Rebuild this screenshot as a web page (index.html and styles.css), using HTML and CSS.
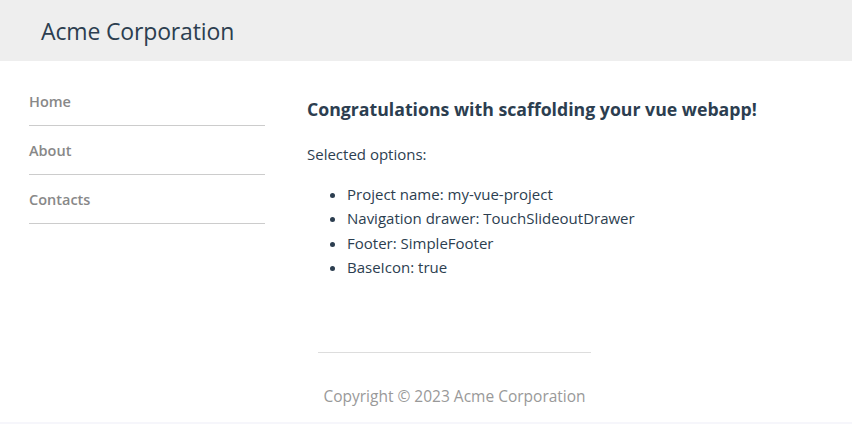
FILE: index.html
```html
<!DOCTYPE html>
<html lang="en">
<head>
<meta charset="utf-8">
<title>Acme Corporation</title>
<link rel="stylesheet" href="styles.css">
</head>
<body>
<div class="app">
  <header class="header">
    <span class="brand">Acme Corporation</span>
  </header>
  <div class="layout">
    <nav class="drawer">
      <a class="nav-item" href="#">Home</a>
      <a class="nav-item" href="#">About</a>
      <a class="nav-item" href="#">Contacts</a>
    </nav>
    <main class="content">
      <h2 class="title">Congratulations with scaffolding your vue webapp!</h2>
      <p class="lead">Selected options:</p>
      <ul class="options">
        <li>Project name: my-vue-project</li>
        <li>Navigation drawer: TouchSlideoutDrawer</li>
        <li>Footer: SimpleFooter</li>
        <li>BaseIcon: true</li>
      </ul>
    </main>
  </div>
  <footer class="footer">
    <div class="footer-rule"></div>
    <p class="copyright">Copyright © 2023 Acme Corporation</p>
  </footer>
  <div class="bottom-strip"></div>
</div>
</body>
</html>
```

FILE: styles.css
```css
html, body {
  margin: 0;
  padding: 0;
  background: #ffffff;
}
body {
  font-family: "Open Sans", "Noto Sans", "Liberation Sans", sans-serif;
  color: #2c3e50;
  font-size: 15px;
}
.app {
  display: flex;
  flex-direction: column;
  height: 424px;
}
.header {
  height: 61px;
  background: #eeeeee;
  display: flex;
  align-items: center;
  padding-left: 41px;
}
.brand {
  font-size: 23px;
  color: #2c3e50;
  letter-spacing: -0.15px;
}
.layout {
  display: flex;
  padding-top: 16px;
}
.drawer {
  margin-left: 29px;
  width: 236px;
  display: flex;
  flex-direction: column;
}
.nav-item {
  display: block;
  height: 48px;
  line-height: 50px;
  border-bottom: 1px solid #cccccc;
  color: #888888;
  font-weight: 600;
  font-size: 14.5px;
  text-decoration: none;
}
.content {
  margin-left: 42px;
  padding-top: 20px;
}
.title {
  margin: 0;
  font-size: 17.7px;
  font-weight: 700;
  line-height: 24px;
  color: #2c3e50;
}
.lead {
  margin: 21px 0 0 0;
  line-height: 24px;
}
.options {
  margin: 16px 0 0 0;
  padding-left: 40px;
  line-height: 24.4px;
}
.footer {
  margin-top: auto;
  padding-left: 57px;
  display: flex;
  flex-direction: column;
  align-items: center;
}
.footer-rule {
  width: 273px;
  height: 1px;
  background: #dddddd;
}
.copyright {
  margin: 32px 0 15px 0;
  line-height: 22px;
  color: #999999;
  font-size: 15.5px;
}
.bottom-strip {
  height: 2px;
  background: #f6f6fb;
}
```
